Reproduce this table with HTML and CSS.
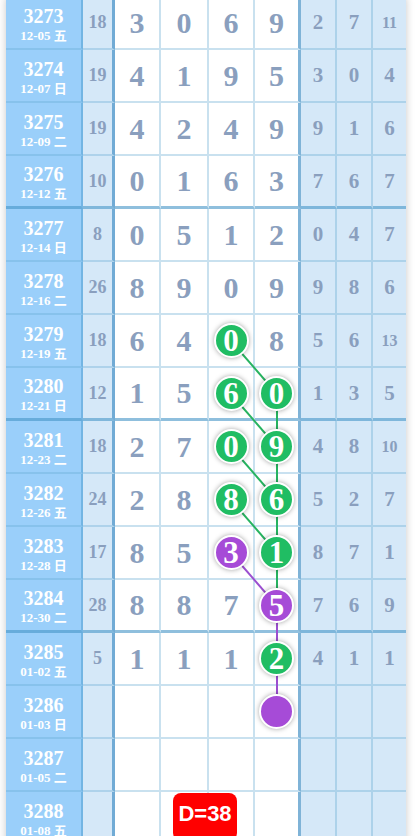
FILE: index.html
```html
<!DOCTYPE html>
<html lang="zh">
<head>
  <meta charset="UTF-8">
  <meta name="viewport" content="width=device-width,initial-scale=1">
  <title>走势图</title>
  <link rel="stylesheet" href="styles.css">
</head>
<body>
  <div class="board">
    <div class="row">
      <div class="cell issue"><b>3273</b><small>12-05 五</small></div>
      <div class="cell sum">18</div>
      <div class="cell big">3</div><div class="cell big">0</div><div class="cell big">6</div><div class="cell big split">9</div>
      <div class="cell side">2</div><div class="cell side">7</div><div class="cell side two last">11</div>
    </div>
    <div class="row">
      <div class="cell issue"><b>3274</b><small>12-07 日</small></div>
      <div class="cell sum">19</div>
      <div class="cell big">4</div><div class="cell big">1</div><div class="cell big">9</div><div class="cell big split">5</div>
      <div class="cell side">3</div><div class="cell side">0</div><div class="cell side last">4</div>
    </div>
    <div class="row">
      <div class="cell issue"><b>3275</b><small>12-09 二</small></div>
      <div class="cell sum">19</div>
      <div class="cell big">4</div><div class="cell big">2</div><div class="cell big">4</div><div class="cell big split">9</div>
      <div class="cell side">9</div><div class="cell side">1</div><div class="cell side last">6</div>
    </div>
    <div class="row sep">
      <div class="cell issue"><b>3276</b><small>12-12 五</small></div>
      <div class="cell sum">10</div>
      <div class="cell big">0</div><div class="cell big">1</div><div class="cell big">6</div><div class="cell big split">3</div>
      <div class="cell side">7</div><div class="cell side">6</div><div class="cell side last">7</div>
    </div>

    <div class="row">
      <div class="cell issue"><b>3277</b><small>12-14 日</small></div>
      <div class="cell sum">8</div>
      <div class="cell big">0</div><div class="cell big">5</div><div class="cell big">1</div><div class="cell big split">2</div>
      <div class="cell side">0</div><div class="cell side">4</div><div class="cell side last">7</div>
    </div>
    <div class="row">
      <div class="cell issue"><b>3278</b><small>12-16 二</small></div>
      <div class="cell sum">26</div>
      <div class="cell big">8</div><div class="cell big">9</div><div class="cell big">0</div><div class="cell big split">9</div>
      <div class="cell side">9</div><div class="cell side">8</div><div class="cell side last">6</div>
    </div>
    <div class="row">
      <div class="cell issue"><b>3279</b><small>12-19 五</small></div>
      <div class="cell sum">18</div>
      <div class="cell big">6</div><div class="cell big">4</div>
      <div class="cell big"><span class="ball green">0</span></div>
      <div class="cell big split">8</div>
      <div class="cell side">5</div><div class="cell side">6</div><div class="cell side two last">13</div>
    </div>
    <div class="row sep">
      <div class="cell issue"><b>3280</b><small>12-21 日</small></div>
      <div class="cell sum">12</div>
      <div class="cell big">1</div><div class="cell big">5</div>
      <div class="cell big"><span class="ball green">6</span></div>
      <div class="cell big split"><span class="ball green">0</span></div>
      <div class="cell side">1</div><div class="cell side">3</div><div class="cell side last">5</div>
    </div>

    <div class="row">
      <div class="cell issue"><b>3281</b><small>12-23 二</small></div>
      <div class="cell sum">18</div>
      <div class="cell big">2</div><div class="cell big">7</div>
      <div class="cell big"><span class="ball green">0</span></div>
      <div class="cell big split"><span class="ball green">9</span></div>
      <div class="cell side">4</div><div class="cell side">8</div><div class="cell side two last">10</div>
    </div>
    <div class="row">
      <div class="cell issue"><b>3282</b><small>12-26 五</small></div>
      <div class="cell sum">24</div>
      <div class="cell big">2</div><div class="cell big">8</div>
      <div class="cell big"><span class="ball green">8</span></div>
      <div class="cell big split"><span class="ball green">6</span></div>
      <div class="cell side">5</div><div class="cell side">2</div><div class="cell side last">7</div>
    </div>
    <div class="row">
      <div class="cell issue"><b>3283</b><small>12-28 日</small></div>
      <div class="cell sum">17</div>
      <div class="cell big">8</div><div class="cell big">5</div>
      <div class="cell big"><span class="ball purple">3</span></div>
      <div class="cell big split"><span class="ball green">1</span></div>
      <div class="cell side">8</div><div class="cell side">7</div><div class="cell side last">1</div>
    </div>
    <div class="row sep">
      <div class="cell issue"><b>3284</b><small>12-30 二</small></div>
      <div class="cell sum">28</div>
      <div class="cell big">8</div><div class="cell big">8</div><div class="cell big">7</div>
      <div class="cell big split"><span class="ball purple">5</span></div>
      <div class="cell side">7</div><div class="cell side">6</div><div class="cell side last">9</div>
    </div>

    <div class="row">
      <div class="cell issue"><b>3285</b><small>01-02 五</small></div>
      <div class="cell sum">5</div>
      <div class="cell big">1</div><div class="cell big">1</div><div class="cell big">1</div>
      <div class="cell big split"><span class="ball green">2</span></div>
      <div class="cell side">4</div><div class="cell side">1</div><div class="cell side last">1</div>
    </div>
    <div class="row">
      <div class="cell issue"><b>3286</b><small>01-03 日</small></div>
      <div class="cell sum"></div>
      <div class="cell big"></div><div class="cell big"></div><div class="cell big"></div>
      <div class="cell big split"><span class="ball purple"></span></div>
      <div class="cell side"></div><div class="cell side"></div><div class="cell side last"></div>
    </div>
    <div class="row">
      <div class="cell issue"><b>3287</b><small>01-05 二</small></div>
      <div class="cell sum"></div>
      <div class="cell big"></div><div class="cell big"></div><div class="cell big"></div><div class="cell big split"></div>
      <div class="cell side"></div><div class="cell side"></div><div class="cell side last"></div>
    </div>
    <div class="row">
      <div class="cell issue"><b>3288</b><small>01-08 五</small></div>
      <div class="cell sum"></div>
      <div class="cell big"></div><div class="cell big"></div><div class="cell big"></div><div class="cell big split"></div>
      <div class="cell side"></div><div class="cell side"></div><div class="cell side last"></div>
    </div>

    <!-- trend lines between the balls -->
    <svg class="lines" width="400" height="848" viewBox="0 0 400 848">
      <g stroke="#27b360" stroke-width="2">
        <line x1="225" y1="344" x2="271" y2="397"/>
        <line x1="225" y1="397" x2="271" y2="450"/>
        <line x1="225" y1="450" x2="271" y2="503"/>
        <line x1="225" y1="503" x2="271" y2="556"/>
        <line x1="271" y1="397" x2="271" y2="662"/>
      </g>
      <g stroke="#9b4fd0" stroke-width="2">
        <line x1="225" y1="556" x2="271" y2="609"/>
        <line x1="271" y1="609" x2="271" y2="715"/>
      </g>
    </svg>

    <div class="badge">D=38</div>
  </div>
</body>
</html>
```

FILE: styles.css
```css
* { box-sizing: border-box; margin: 0; padding: 0; }
body {
  background: #fff;
  font-family: "Liberation Serif", "Noto Sans CJK SC", serif;
  font-weight: bold;
  color: #8a9fbe;
}
.board {
  position: relative;
  width: 400px;
  margin: -3px 0 0 6px;
  box-shadow: 0 0 8px rgba(0,0,0,0.22);
}
.row {
  display: grid;
  grid-template-columns: 77px 32px 46px 48px 46px 46px 36px 36px 33px;
  height: 53px;
}
.cell {
  display: flex;
  align-items: center;
  justify-content: center;
  border-right: 2px solid rgba(100,170,210,0.35);
  border-bottom: 2px solid rgba(100,170,210,0.35);
}
.row.sep .cell { border-bottom: 3px solid rgba(70,150,200,0.6); }
.issue {
  flex-direction: column;
  padding-top: 3px;
  background: #9acffa;
  color: #fff;
  border-right-color: rgba(70,150,200,0.45);
}
.issue b { font-size: 20px; line-height: 22px; }
.issue small {
  font-size: 13px;
  line-height: 17px;
  font-weight: bold;
}
.sum {
  background: #d5e8f8;
  font-size: 18px;
  border-right: 3px solid rgba(60,140,195,0.65);
}
.big { font-size: 30px; }
.big.split { border-right: 3px solid rgba(60,140,195,0.65); }
.side {
  background: #d5e8f8;
  font-size: 21px;
}
.side.two { font-size: 16px; }
.side.last { border-right: none; }

.ball {
  position: relative;
  z-index: 2;
  width: 35px;
  height: 35px;
  border-radius: 50%;
  border: 2px solid #fff;
  display: flex;
  align-items: center;
  justify-content: center;
  color: #fff;
  font-size: 31px;
  line-height: 1;
  box-shadow: 0 0 5px rgba(0,0,0,0.35);
}
.ball.green { background: #20bd63; }
.ball.purple { background: #a64bd7; }

.lines {
  position: absolute;
  top: 0;
  left: 0;
  z-index: 1;
  pointer-events: none;
}
.badge {
  position: absolute;
  z-index: 3;
  left: 167px;
  top: 796px;
  width: 64px;
  height: 48px;
  padding-top: 8px;
  border-radius: 8px;
  background: #ff0000;
  color: #fff;
  font-family: "Liberation Sans", Arial, sans-serif;
  font-size: 22px;
  line-height: 26px;
  text-align: center;
}
```
